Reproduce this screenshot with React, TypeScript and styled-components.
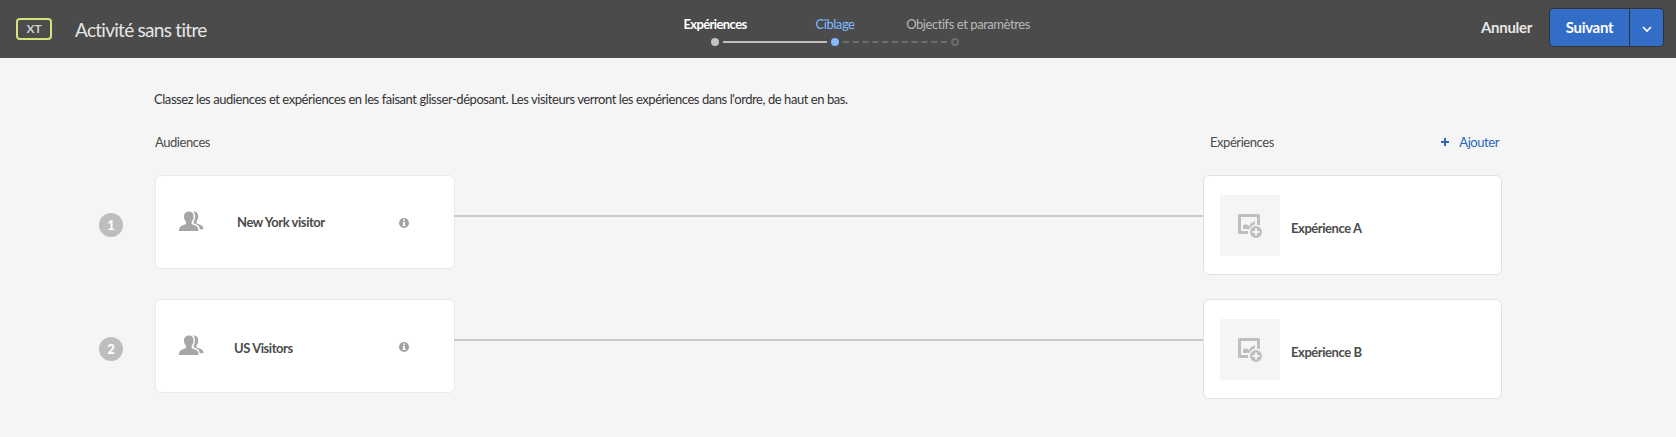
import React from 'react';
import styled, { createGlobalStyle } from 'styled-components';

const GlobalStyle = createGlobalStyle`
  * { box-sizing: border-box; }
  body {
    margin: 0;
    background: #f5f5f5;
    color: #323232;
    font-family: Lato, "Open Sans", sans-serif;
    font-size: 13px;
    line-height: 18px;
    letter-spacing: -0.44px;
  }
`;

const Header = styled.header`
  display: grid;
  grid-template-columns: 1fr auto 1fr;
  height: 58px;
  background: #4b4b4b;
`;

const TitleArea = styled.div`
  display: flex;
  align-items: center;
  padding-left: 16px;
`;

const TypeBadge = styled.span`
  width: 36px;
  height: 22px;
  border: 2px solid #d7e37d;
  border-radius: 4px;
  color: #cfcfcf;
  font-size: 12px;
  font-weight: 700;
  letter-spacing: -0.2px;
  line-height: 18px;
  text-align: center;
`;

const Title = styled.h1`
  margin: 2px 0 0 23px;
  color: #e6e6e6;
  font-size: 19px;
  font-weight: 400;
  letter-spacing: -0.72px;
  line-height: 26px;
`;

const Steps = styled.nav`
  display: grid;
  grid-template-columns: repeat(3, 120px);
  align-content: start;
  margin-right: 6px;
  padding-top: 15px;
`;

const StepLabel = styled.div<{ $color: string; $strong?: boolean; $indent?: number }>`
  display: flex;
  justify-content: center;
  padding-left: ${p => p.$indent ?? 0}px;
  color: ${p => p.$color};
  font-weight: ${p => (p.$strong ? 700 : 400)};
  letter-spacing: ${p => (p.$strong ? -0.6 : -0.44)}px;
  white-space: nowrap;
`;

const Track = styled.svg`
  grid-column: 1 / -1;
  display: block;
  margin-top: 4px;
`;

const Actions = styled.div`
  display: flex;
  justify-content: flex-end;
  align-items: flex-start;
  padding: 8px 12px 0 0;
`;

const CancelButton = styled.button`
  height: 39px;
  margin-right: 17px;
  padding: 0;
  border: 0;
  background: none;
  color: #e6e6e6;
  font: 700 15px/39px Lato, "Open Sans", sans-serif;
  letter-spacing: -0.3px;
`;

const SplitButton = styled.div`
  display: flex;
  width: 115px;
  height: 39px;
  overflow: hidden;
  border: 1px solid #323232;
  border-radius: 4px;
  background: #326ec8;
`;

const NextButton = styled.button`
  width: 80px;
  padding: 0;
  border: 0;
  border-right: 1px solid #323232;
  background: none;
  color: #fff;
  font: 700 15px/37px Lato, "Open Sans", sans-serif;
  letter-spacing: -0.3px;
`;

const MenuButton = styled.button`
  display: grid;
  place-items: center;
  flex: 1;
  padding: 4px 0 0;
  border: 0;
  background: none;
`;

const Content = styled.main`
  width: 1403px;
  margin-left: 99px;
  padding-top: 32px;
`;

const Intro = styled.p`
  margin: 0 0 0 55px;
  white-space: nowrap;
`;

const ColumnHeads = styled.div`
  display: flex;
  justify-content: space-between;
  margin: 25px 0 24px 56px;
  padding-right: 3px;
  color: #4b4b4b;
`;

const ExperienceHead = styled.div`
  display: flex;
  justify-content: space-between;
  width: 289px;
`;

const AddLink = styled.a`
  display: flex;
  align-items: center;
  gap: 10px;
  color: #2a65c4;
`;

const Row = styled.section`
  display: grid;
  grid-template-columns: 56px 300px 1fr 299px;
  align-items: start;
  height: 124px;
`;

const Rank = styled.div`
  width: 24px;
  height: 24px;
  margin-top: 38px;
  border-radius: 50%;
  background: #bebebe;
  color: #fff;
  font-size: 13px;
  font-weight: 900;
  letter-spacing: 0;
  line-height: 24px;
  text-align: center;
`;

const AudienceCard = styled.article`
  display: flex;
  align-items: flex-start;
  height: 94px;
  padding: 35px 45px 0 23px;
  border: 1px solid #eaeaea;
  border-radius: 6px;
  background: #fff;
`;

const AudienceName = styled.div<{ $left: number; $top: number }>`
  flex: 1;
  margin: ${p => p.$top}px 0 0 ${p => p.$left}px;
  color: #4b4b4b;
  font-weight: 700;
`;

const InfoIcon = styled.svg`
  margin-top: 7px;
`;

const Connector = styled.div`
  height: 2px;
  margin: 40px 0 0 -1px;
  background: #cacaca;
`;

const ExperienceCard = styled.article`
  display: flex;
  align-items: flex-start;
  height: 100px;
  padding: 19px 16px 0;
  border: 1px solid #e1e1e1;
  border-radius: 6px;
  background: #fff;
`;

const Thumbnail = styled.div`
  display: grid;
  justify-items: center;
  align-content: start;
  width: 60px;
  height: 61px;
  padding-top: 19px;
  background: #f5f5f5;
`;

const ExperienceName = styled.div`
  margin: 24px 0 0 11px;
  color: #4b4b4b;
  font-weight: 700;
`;

const PeopleIcon = () => (
  <svg width="25" height="21" viewBox="0 0 25 21" fill="#a6a6a6">
    <path d="M14.200.6c2.900-.3 5 1.500 5 4.700 0 2.200-.7 4-1.700 5.100v1.400c.1.700.5 1 1.500 1.300 3.200.9 5.400 2 5.500 5.100h-5l-5-5z" />
    <path
      d="M10 .5c2.700 0 4.600 1.800 4.600 4.900 0 2.300-.8 4.200-2 5.300v1.800c.1.700.6 1 1.600 1.300 3 .8 5 2.100 5.200 4.900V22H0v-3.300c.3-2.800 2.300-4.100 5.300-4.900 1-.3 1.700-.6 1.700-1.300v-1.800c-1.200-1.100-2-3-2-5.300C5 2.300 7.300.5 10 .5z"
      stroke="#fff"
      strokeWidth="3"
      paintOrder="stroke"
    />
    <path d="M0 20h25v1H0z" fill="#fff" />
  </svg>
);

const ImageAddIcon = () => (
  <svg width="24" height="24" viewBox="0 0 24 24">
    <path d="M10 18.500H1.500v-17h19V11" fill="none" stroke="#bebebe" strokeWidth="3" strokeLinejoin="round" />
    <path d="M5 15v-3.200l1.500-1.300h2.300l2.200 1.700 2.400-3.800h2L17 6.500V10l-3.500 5z" fill="#bebebe" />
    <circle cx="18" cy="18" r="6.700" fill="#bebebe" stroke="#f5f5f5" strokeWidth="1.500" />
    <path d="M18 14.500v7M14.500 18h7" stroke="#f5f5f5" strokeWidth="2" />
  </svg>
);

const rows = [
  { audience: 'New York visitor', left: 33, top: 2, experience: 'Expérience A' },
  { audience: 'US Visitors', left: 30, top: 4, experience: 'Expérience B' },
];

export default function App() {
  return (
    <>
      <GlobalStyle />
      <Header>
        <TitleArea>
          <TypeBadge>XT</TypeBadge>
          <Title>Activité sans titre</Title>
        </TitleArea>
        <Steps>
          <StepLabel $color="#fff" $strong>Expériences</StepLabel>
          <StepLabel $color="#82b9ff">Ciblage</StepLabel>
          <StepLabel $color="#b9b9b9" $indent={26}>Objectifs et paramètres</StepLabel>
          <Track width="360" height="10" viewBox="0 0 360 10">
            <circle cx="60" cy="5" r="4" fill="#c3c3c3" />
            <path d="M68 5h104" stroke="#bebebe" strokeWidth="2" />
            <circle cx="180" cy="5" r="4" fill="#82b9ff" />
            <path d="M188 5h105" stroke="#6e6e6e" strokeWidth="2" strokeDasharray="6 3.8" />
            <circle cx="300" cy="5" r="3" fill="none" stroke="#6e6e6e" strokeWidth="2" />
          </Track>
        </Steps>
        <Actions>
          <CancelButton>Annuler</CancelButton>
          <SplitButton>
            <NextButton>Suivant</NextButton>
            <MenuButton aria-label="Plus">
              <svg width="10" height="7" viewBox="0 0 10 7" fill="none" stroke="#fff" strokeWidth="1.700">
                <path d="M1 1l4 4 4-4" />
              </svg>
            </MenuButton>
          </SplitButton>
        </Actions>
      </Header>
      <Content>
        <Intro>
          Classez les audiences et expériences en les faisant glisser-déposant. Les visiteurs verront les expériences dans l'ordre, de haut en bas.
        </Intro>
        <ColumnHeads>
          <span>Audiences</span>
          <ExperienceHead>
            <span>Expériences</span>
            <AddLink>
              <svg width="8" height="8" viewBox="0 0 8 8" stroke="#2a65c4" strokeWidth="2">
                <path d="M4 0v8M0 4h8" />
              </svg>
              Ajouter
            </AddLink>
          </ExperienceHead>
        </ColumnHeads>
        {rows.map((row, i) => (
          <Row key={row.audience}>
            <Rank>{i + 1}</Rank>
            <AudienceCard>
              <PeopleIcon />
              <AudienceName $left={row.left} $top={row.top}>{row.audience}</AudienceName>
              <InfoIcon width="10" height="10" viewBox="0 0 10 10">
                <circle cx="5" cy="5" r="5" fill="#a0a0a0" />
                <path d="M4.200 1.500h1.800v1.500H4.200zM3.500 4H6v3h.8v1H3.300V7h.9V5h-.7z" fill="#fff" />
              </InfoIcon>
            </AudienceCard>
            <Connector />
            <ExperienceCard>
              <Thumbnail><ImageAddIcon /></Thumbnail>
              <ExperienceName>{row.experience}</ExperienceName>
            </ExperienceCard>
          </Row>
        ))}
      </Content>
    </>
  );
}
